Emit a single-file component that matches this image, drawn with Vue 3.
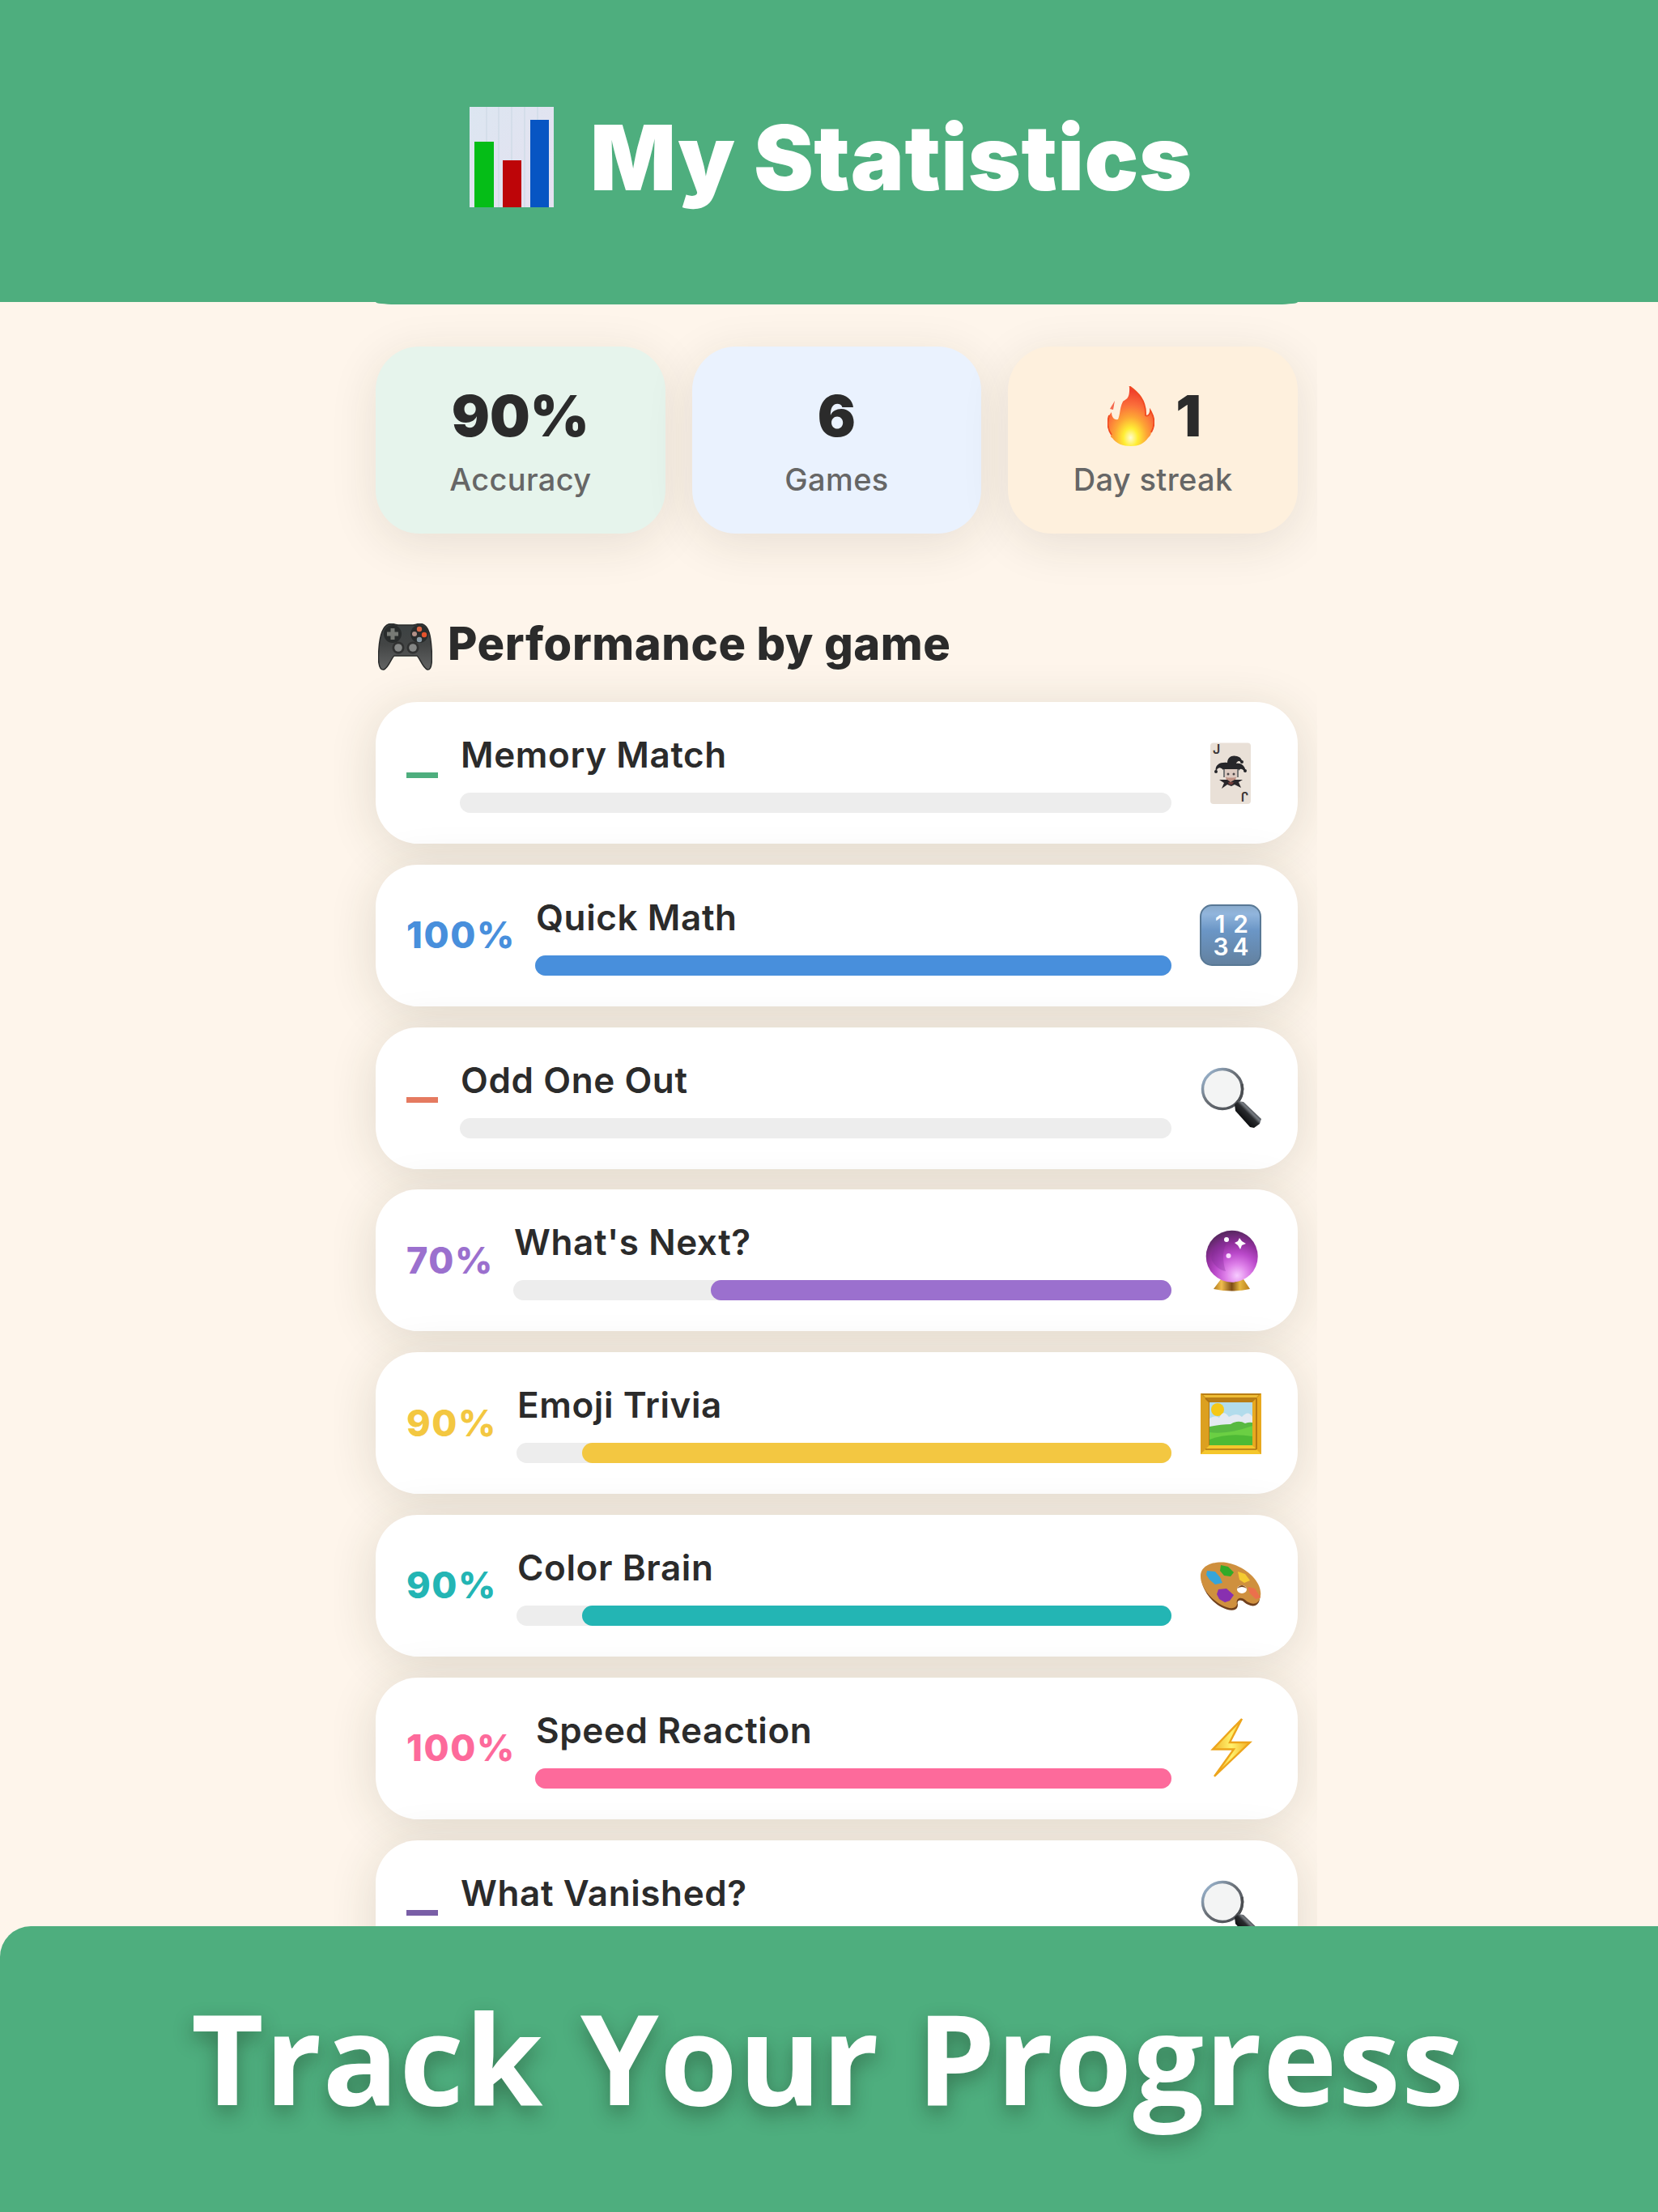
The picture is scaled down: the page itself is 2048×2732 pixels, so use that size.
<template>
  <div class="page">
    <header class="header">
      <svg class="chart-icon" viewBox="0 0 104 124">
        <defs>
          <linearGradient id="paper" x1="0" y1="0" x2="1" y2="1">
            <stop offset="0" stop-color="#dce6f1" />
            <stop offset="1" stop-color="#e6e1f0" />
          </linearGradient>
        </defs>
        <rect width="104" height="124" fill="url(#paper)" />
        <path d="M21 0V124M36 0V124M52 0V124M68 0V124M84 0V124" stroke="#d4deea" stroke-width="2" />
        <rect x="6" y="43" width="24" height="81" fill="#05bd17" />
        <rect x="41" y="66" width="23" height="58" fill="#bd0508" />
        <rect x="75" y="16" width="23" height="108" fill="#0755c3" />
      </svg>
      <h1 class="title">My Statistics</h1>
    </header>

    <main class="screen">
      <div class="hero-edge"></div>

      <!-- summary cards -->
      <section class="stats">
        <div v-for="stat in stats" :key="stat.label" class="stat" :class="stat.tone">
          <div class="stat-value">
            <svg v-if="stat.fire" class="fire" viewBox="0 0 58 74">
              <defs>
                <radialGradient id="flame" cx="0.5" cy="0.86" r="0.78">
                  <stop offset="0" stop-color="#fffbd0" />
                  <stop offset="0.2" stop-color="#ffee35" />
                  <stop offset="0.45" stop-color="#fda535" />
                  <stop offset="0.7" stop-color="#fb6f3b" />
                  <stop offset="1" stop-color="#f0402c" />
                </radialGradient>
              </defs>
              <path d="M27 0C37 7 48 17 47 36C50 38 53 34 53 30C59 40 58 50 54 57C54 60 52 62 50 64C45 71 38 74 29 74C19 74 11 71 6 64C4 63 3 61 5 60C0 53-2 44 2 36L5 32C5 38 8 42 13 41C16 34 15 26 19 19C22 16 28 17 27 0Z" fill="url(#flame)" />
              <path d="M27 0C37 7 48 17 47 36C50 38 53 34 53 30C59 40 58 50 54 57M2 36C-1 46 0 53 5 60" fill="none" stroke="#f04a20" stroke-width="1.8" />
              <path d="M9 18L7 29L3 28Z" fill="#f4674d" />
            </svg>
            <span>{{ stat.value }}</span>
          </div>
          <div class="stat-label">{{ stat.label }}</div>
        </div>
      </section>

      <h2 class="section-title">
        <svg class="gamepad" viewBox="0 0 67 58">
          <defs>
            <linearGradient id="pad" x1="0" y1="0" x2="0" y2="1">
              <stop offset="0" stop-color="#3b4142" />
              <stop offset="0.45" stop-color="#434545" />
              <stop offset="1" stop-color="#626363" />
            </linearGradient>
          </defs>
          <path d="M13 1C18-1 21 2 25 2H43C47 2 50-1 55 1C63 4 65 16 66 31C67 43 67 58 61 57C55 55 52 43 48 40H20C16 43 13 55 7 57C0 58 0 44 1 31C2 17 5 4 13 1Z" fill="url(#pad)" stroke="#292b2b" stroke-width="1.5" />
          <circle cx="18" cy="13" r="11" fill="#292c2c" />
          <circle cx="51" cy="13" r="11" fill="#292c2c" />
          <path d="M18 6V20M11 13H25" stroke="#777a75" stroke-width="5" />
          <circle cx="51" cy="7" r="3.2" fill="#db6543" />
          <circle cx="57" cy="14" r="3.2" fill="#e5532d" />
          <circle cx="51" cy="20" r="3.2" fill="#8b9ba5" />
          <circle cx="45" cy="13" r="3" fill="#b39188" />
          <circle cx="25" cy="30" r="7.5" fill="#303131" />
          <circle cx="43" cy="30" r="7.5" fill="#303131" />
          <circle cx="25" cy="30" r="4.8" fill="#858786" />
          <circle cx="43" cy="30" r="4.8" fill="#858786" />
        </svg>
        <span>Performance by game</span>
      </h2>

      <!-- one card per game -->
      <section class="games">
        <article v-for="game in games" :key="game.name" class="game" :class="game.tone">
          <div v-if="game.score === null" class="score empty"><span class="dash"></span></div>
          <div v-else class="score" :class="'w' + game.score">{{ game.score }}%</div>
          <div class="info">
            <div class="name">{{ game.name }}</div>
            <div class="track">
              <div v-if="game.score" class="fill" :style="{ width: game.score + '%' }"></div>
            </div>
          </div>

          <svg v-if="game.icon === 'joker'" class="icon" viewBox="0 0 76 76">
            <rect x="13" y="0.5" width="50" height="75.5" rx="4" fill="#e9e0d7" />
            <text class="joker-j" x="16" y="14">J</text>
            <text class="joker-j" x="-60" y="-61" transform="rotate(180)">J</text>
            <path d="M29 34C25 29 21 31 20 37C18 29 23 24 34 25C34 18 40 15 46 17C50 18 53 21 52 26C49 21 46 23 45 26C52 25 56 29 57 37C53 33 50 31 48 35Z" fill="#26262a" />
            <circle cx="20" cy="36" r="2" fill="#26262a" />
            <circle cx="52" cy="24" r="2" fill="#26262a" />
            <circle cx="56" cy="35" r="2" fill="#26262a" />
            <path d="M30 33H47L46 43L38 51L31 43Z" fill="#dccac1" />
            <path d="M30 33V43M47 33V43" stroke="#777" stroke-width="2" />
            <circle cx="35" cy="39" r="1.5" fill="#4a4546" />
            <circle cx="42" cy="39" r="1.5" fill="#4a4546" />
            <path d="M32 43Q38 44 45 43L43 49H34Z" fill="#bf9285" />
            <path d="M24 46L34 46L38 49L43 46L53 46L48 49L51 56L43 52L39 54L34 52L27 57L30 50Z" fill="#29262a" />
            <path d="M35 49H42L40 52H36Z" fill="#713b38" />
          </svg>

          <svg v-else-if="game.icon === 'numbers'" class="icon" viewBox="0 0 76 76">
            <defs>
              <linearGradient id="key" x1="0" y1="0" x2="0" y2="1">
                <stop offset="0" stop-color="#8aabcc" />
                <stop offset="0.15" stop-color="#91b5dc" />
                <stop offset="0.42" stop-color="#6b96c6" />
                <stop offset="1" stop-color="#63819f" />
              </linearGradient>
            </defs>
            <rect x="1" y="1" width="74" height="74" rx="14" fill="url(#key)" stroke="#587895" stroke-width="2" />
            <text class="digit" x="25" y="34.5">1</text>
            <text class="digit" x="50.5" y="34.5">2</text>
            <text class="digit" x="26" y="63">3</text>
            <text class="digit" x="50.5" y="63">4</text>
          </svg>

          <svg v-else-if="game.icon === 'search'" class="icon" viewBox="0 0 76 76">
            <defs>
              <linearGradient id="ring" x1="0" y1="0" x2="1" y2="1">
                <stop offset="0" stop-color="#a5c4e3" />
                <stop offset="0.45" stop-color="#6a7077" />
                <stop offset="1" stop-color="#45484d" />
              </linearGradient>
              <linearGradient id="grip" x1="0" y1="1" x2="1" y2="0">
                <stop offset="0.25" stop-color="#050607" />
                <stop offset="0.52" stop-color="#292b2e" />
                <stop offset="0.6" stop-color="#777c82" />
                <stop offset="0.75" stop-color="#202225" />
              </linearGradient>
            </defs>
            <circle cx="28" cy="27" r="24.5" fill="#f3f4f4" stroke="url(#ring)" stroke-width="3.5" />
            <path d="M45 45A25 25 0 0 0 52 21" fill="none" stroke="#4c4f53" stroke-width="3.5" />
            <path d="M43 46L48 42L54 43L76 64L74 70L67 75L62 74L44 54Z" fill="url(#grip)" />
          </svg>

          <svg v-else-if="game.icon === 'crystal'" class="icon" viewBox="0 0 76 76">
            <defs>
              <radialGradient id="orb" cx="0.6" cy="0.87" r="0.85">
                <stop offset="0" stop-color="#f7cbff" />
                <stop offset="0.25" stop-color="#df82ea" />
                <stop offset="0.5" stop-color="#bb4acb" />
                <stop offset="0.75" stop-color="#8f2f9b" />
                <stop offset="1" stop-color="#5b2864" />
              </radialGradient>
              <linearGradient id="base">
                <stop offset="0" stop-color="#ae781b" />
                <stop offset="0.22" stop-color="#f0bd4e" />
                <stop offset="0.5" stop-color="#7f4d16" />
                <stop offset="0.72" stop-color="#e6b740" />
                <stop offset="1" stop-color="#b77c18" />
              </linearGradient>
            </defs>
            <path d="M26 61H54L62 73Q40 78 17 73Z" fill="url(#base)" />
            <circle cx="39.7" cy="32.7" r="32" fill="url(#orb)" />
            <path d="M15 38C12 24 25 7 39 9C28 18 27 35 32 51C25 50 19 45 15 38Z" fill="#7b2a91" opacity="0.3" />
            <circle cx="33" cy="12" r="3" fill="#fff" />
            <circle cx="35.5" cy="32" r="3" fill="#f9dcff" />
            <path d="M49 10L52 14L57 17L52 19L50 24L47 19L43 16L47 14Z" fill="#fff" />
          </svg>

          <svg v-else-if="game.icon === 'picture'" class="icon" viewBox="0 0 76 76">
            <rect x="1" y="1" width="75" height="75" fill="#d99b19" />
            <path d="M1 1H76L65 12H12Z" fill="#b97e15" />
            <path d="M4 3H73L70 6H7Z" fill="#efbd35" />
            <path d="M76 1V76L65 65V12Z" fill="#e8a91f" />
            <path d="M1 76V1L12 12V65Z" fill="#dca020" />
            <path d="M1 76L12 65H65L76 76Z" fill="#f5c72c" />
            <path d="M7 7L12 12V65M70 7V70M7 70H70" fill="none" stroke="#ac7013" stroke-width="1.7" />
            <rect x="12" y="12" width="53" height="53" fill="#b2dcec" />
            <circle cx="22" cy="21" r="8" fill="#f5c817" />
            <path d="M12 38V32Q19 27 24 31Q29 20 36 30Q46 24 52 30Q60 21 65 30V42H12Z" fill="#e4eaf2" />
            <path d="M12 42Q27 39 38 39Q48 33 56 38Q61 36 65 37V65H12Z" fill="#58b941" />
            <path d="M12 49Q35 52 65 41V65H12Z" fill="#6bcf43" />
            <path d="M12 58Q35 49 65 54V65H12Z" fill="#4eba35" />
          </svg>

          <svg v-else-if="game.icon === 'palette'" class="icon" viewBox="0 0 76 76">
            <path d="M2 28C2 16 16 9 34 12C55 16 78 37 74 55C72 67 61 64 55 59C51 55 45 56 47 62C47 71 36 70 27 65C12 57 2 41 2 28Z" fill="#70401d" />
            <path d="M1 27C1 14 15 8 33 10C54 13 78 33 75 51C73 64 62 62 56 56C50 51 44 55 46 61C45 68 36 67 28 63C13 55 1 40 1 27Z" fill="#cf903e" />
            <ellipse cx="52" cy="43" rx="6" ry="5" fill="#fff" />
            <path d="M46 42Q52 34 58 42Q52 38 46 42Z" fill="#7a481d" />
            <path d="M9 20L19 21L25 28L28 35L19 37L12 31L8 25Z" fill="#36a5da" />
            <path d="M26 13L35 15L42 22L38 27L30 26L25 20Z" fill="#32aa28" />
            <path d="M47 21L56 24L62 32L55 35L49 31Z" fill="#f5cb31" />
            <path d="M59 40L68 42L75 53L69 55L62 48Z" fill="#eb704c" />
            <path d="M23 43L33 42L42 50L37 57L31 59L24 55L21 49Z" fill="#8830b0" />
          </svg>

          <svg v-else class="icon" viewBox="0 0 76 76">
            <defs>
              <linearGradient id="bolt">
                <stop offset="0" stop-color="#f2b52b" />
                <stop offset="0.5" stop-color="#fff26d" />
                <stop offset="1" stop-color="#f2ad20" />
              </linearGradient>
            </defs>
            <path d="M52 2L16 39.5H42L18 73L62 31H37Z" fill="url(#bolt)" stroke="#eda51c" stroke-width="2.4" />
          </svg>
        </article>
      </section>
    </main>

    <footer class="banner">Track Your Progress</footer>
  </div>
</template>

<script setup>
const stats = [
  { value: '90%', label: 'Accuracy', tone: 'mint' },
  { value: '6', label: 'Games', tone: 'sky' },
  { value: '1', label: 'Day streak', tone: 'peach', fire: true },
]

const games = [
  { name: 'Memory Match', score: null, tone: 'green', icon: 'joker' },
  { name: 'Quick Math', score: 100, tone: 'blue', icon: 'numbers' },
  { name: 'Odd One Out', score: null, tone: 'coral', icon: 'search' },
  { name: "What's Next?", score: 70, tone: 'purple', icon: 'crystal' },
  { name: 'Emoji Trivia', score: 90, tone: 'yellow', icon: 'picture' },
  { name: 'Color Brain', score: 90, tone: 'teal', icon: 'palette' },
  { name: 'Speed Reaction', score: 100, tone: 'pink', icon: 'bolt' },
  { name: 'What Vanished?', score: null, tone: 'violet', icon: 'search' },
]
</script>

<style>
body {
  margin: 0;
  background: #fef5eb;
}
</style>

<style scoped>
.page {
  width: 2048px;
  height: 2732px;
  display: flex;
  flex-direction: column;
  overflow: hidden;
  background: #fef5eb;
  font-family: Inter, "Liberation Sans", sans-serif;
  color: #2b2b2b;
}

.header {
  flex: none;
  box-sizing: border-box;
  height: 373px;
  padding: 132px 0 0 580px;
  display: flex;
  align-items: flex-start;
  gap: 45px;
  background: #4eae7e;
}

.chart-icon {
  flex: none;
  width: 104px;
  height: 124px;
}

.title {
  margin: 0;
  color: #fff;
  font-size: 111px;
  line-height: 126px;
  font-weight: 900;
  letter-spacing: 0.5px;
  white-space: nowrap;
}

.screen {
  flex: none;
  box-sizing: border-box;
  width: 1215px;
  height: 2006px;
  margin-left: 412px;
  padding: 0 24px 0 52px;
  overflow: hidden;
}

/* bottom edge of the card hidden under the header */
.hero-edge {
  height: 3px;
  background: #4eae7e;
  border-radius: 0 0 24px 24px / 0 0 3px 3px;
}

/* summary */
.stats {
  display: grid;
  grid-template-columns: repeat(3, 1fr);
  gap: 33px;
  margin-top: 52px;
}

.stat {
  box-sizing: border-box;
  height: 231px;
  padding-top: 44px;
  border-radius: 54px;
  text-align: center;
  box-shadow: 0 12px 60px rgba(50, 50, 30, 0.11);
}

.mint {
  background: #e6f4ec;
}

.sky {
  background: #eaf2fe;
}

.peach {
  background: #fef0dd;
}

.stat-value {
  display: flex;
  justify-content: center;
  align-items: center;
  gap: 26px;
  height: 84px;
  font-size: 70px;
  line-height: 84px;
  font-weight: 900;
}

.fire {
  width: 58px;
  height: 74px;
  margin-left: 4px;
}

.stat-label {
  margin-top: 13px;
  color: #666;
  font-size: 38px;
  line-height: 46px;
  font-weight: 500;
  letter-spacing: 0.35px;
}

/* section heading */
.section-title {
  display: flex;
  align-items: center;
  gap: 19px;
  height: 68px;
  margin: 103px 0 37px 3px;
  font-size: 56px;
  line-height: 68px;
  font-weight: 800;
  letter-spacing: 0.6px;
  white-space: nowrap;
}

.section-title span {
  margin-top: -2px;
}

.gamepad {
  width: 67px;
  height: 58px;
  margin-top: 6px;
}

/* games */
.games {
  display: flex;
  flex-direction: column;
  gap: 25.8px;
}

.game {
  flex: none;
  box-sizing: border-box;
  height: 175px;
  padding: 0 45px 0 38px;
  display: flex;
  align-items: center;
  border-radius: 52px;
  background: #fff;
  box-shadow: 0 8px 60px rgba(50, 55, 30, 0.14);
}

/* keeps a card above the shadow of the next one */
.info,
.score,
.icon {
  position: relative;
}

.score {
  flex: none;
  font-size: 45px;
  line-height: 54px;
  font-weight: 800;
  letter-spacing: 1.6px;
  white-space: nowrap;
}

.empty {
  width: 66px;
}

.dash {
  display: block;
  width: 39px;
  height: 7px;
  margin-top: 5px;
  background: currentColor;
}

.w100 {
  width: 159px;
}

.w90 {
  width: 136px;
}

.w70 {
  width: 132px;
}

.info {
  flex: 1;
}

.name {
  margin-bottom: 20px;
  padding-left: 1px;
  color: #2b2b2b;
  font-size: 44px;
  line-height: 54px;
  font-weight: 600;
  letter-spacing: 0.6px;
}

.track {
  display: flex;
  justify-content: flex-end;
  height: 25px;
  border-radius: 13px;
  background: #ededed;
}

.fill {
  border-radius: 13px;
  background: currentColor;
}

.green {
  color: #4eae7e;
}

.blue {
  color: #488fdc;
}

.coral {
  color: #e57a60;
}

.purple {
  color: #9b70ce;
}

.yellow {
  color: #f3c741;
}

.teal {
  color: #23b5b4;
}

.pink {
  color: #fd6a9b;
}

.violet {
  color: #795ea6;
}

.icon {
  flex: none;
  width: 76px;
  height: 76px;
  margin-left: 35px;
  overflow: visible;
}

.joker-j {
  font-size: 16px;
  font-weight: 600;
  fill: #3b3735;
}

.digit {
  font-size: 30px;
  font-weight: 600;
  fill: #fff;
  text-anchor: middle;
}

/* bottom caption */
.banner {
  position: relative;
  flex: none;
  box-sizing: border-box;
  height: 353px;
  padding-left: 236px;
  border-radius: 38px 0 0 0;
  background: #4eae7e;
  color: #fff;
  font-family: "Open Sans", "Noto Sans", sans-serif;
  font-size: 155px;
  line-height: 322px;
  font-weight: 700;
  letter-spacing: 1.2px;
  word-spacing: 4px;
  white-space: nowrap;
  text-shadow: 0 10px 24px rgba(20, 40, 20, 0.38);
}
</style>
